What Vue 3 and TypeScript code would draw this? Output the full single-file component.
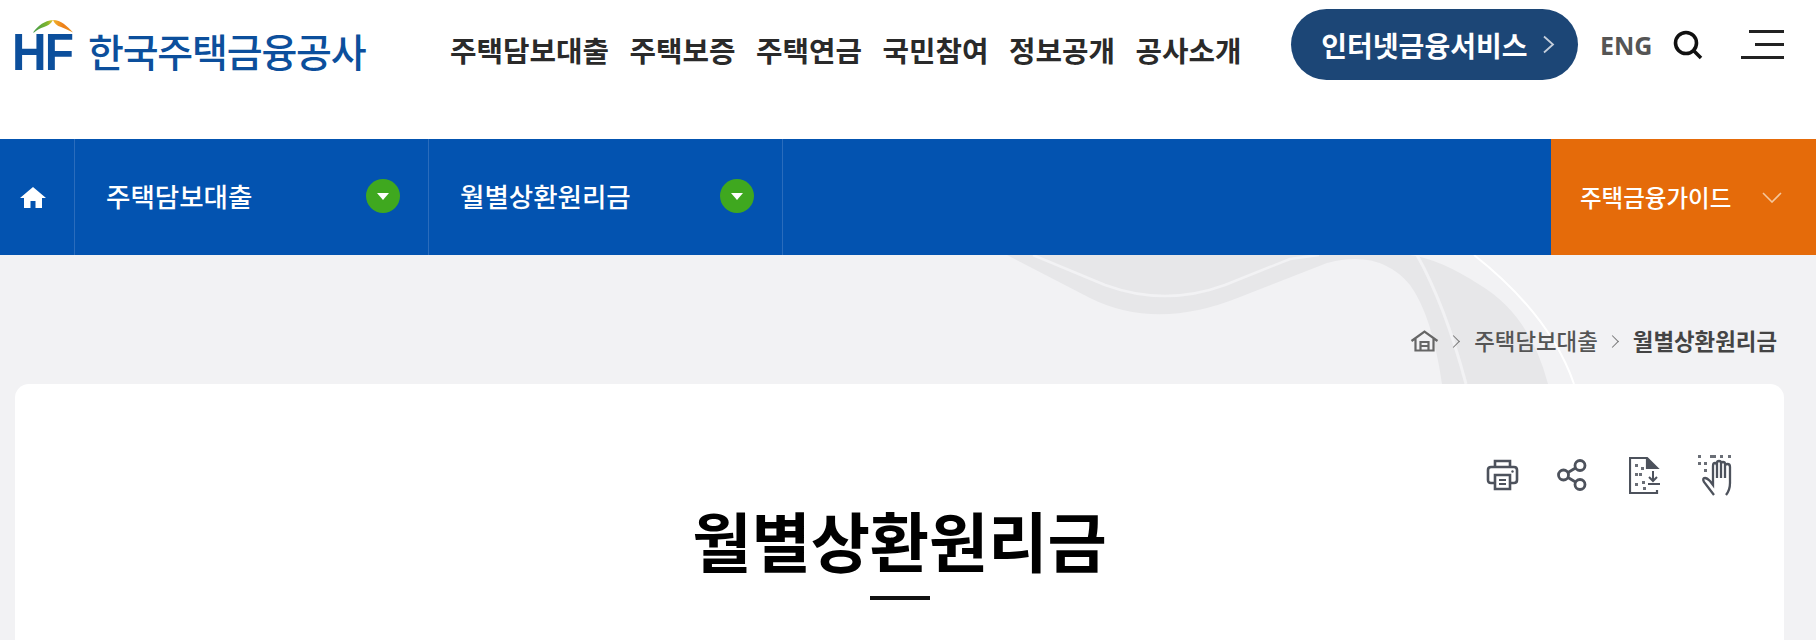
<script setup lang="ts">
const gnb: string[] = ['주택담보대출', '주택보증', '주택연금', '국민참여', '정보공개', '공사소개']
const selects: string[] = ['주택담보대출', '월별상환원리금']
// braille dots around the hand icon
const dots: number[][] = [[0, 1], [12, 1], [15, 1], [22, 1], [30, 1], [0, 8], [6, 8], [6, 15]]
</script>

<template>
  <div class="page">
    <header class="header">
      <a class="logo">
        <span class="logo-mark">
          <svg class="roof" width="40" height="13" viewBox="0 0 40 13">
            <defs>
              <linearGradient id="leaf-l" x1="0" x2="1" y1="0" y2="0">
                <stop offset="0" stop-color="#3f9a4a" />
                <stop offset="0.7" stop-color="#7db52e" />
                <stop offset="1" stop-color="#e6c02c" />
              </linearGradient>
              <linearGradient id="leaf-r" x1="0" x2="1" y1="0" y2="0">
                <stop offset="0" stop-color="#f0b429" />
                <stop offset="0.5" stop-color="#ee7f1a" />
                <stop offset="1" stop-color="#e8901e" />
              </linearGradient>
            </defs>
            <path d="M0 12.5 C6 5 11 1 20 0 C18 4 14 6 11 7 C7 8 4 10 1 12.5 Z" fill="url(#leaf-l)" />
            <path d="M20 0 C28 0 34 6 40 12.5 C35 10 31 8 28 7 C24 6 21 3 20 0 Z" fill="url(#leaf-r)" />
          </svg>
          <span class="hf">HF</span>
        </span>
        <span class="logo-text">한국주택금융공사</span>
      </a>
      <nav class="gnb">
        <a v-for="item in gnb" :key="item">{{ item }}</a>
      </nav>
      <a class="service-btn">
        인터넷금융서비스
        <svg width="13" height="19" viewBox="0 0 13 19">
          <path d="M2 1.5 L11 9.5 L2 17.5" fill="none" stroke="#c4cedb" stroke-width="1.8" />
        </svg>
      </a>
      <a class="eng">ENG</a>
      <svg class="search" width="30" height="30" viewBox="0 0 30 30">
        <circle cx="13" cy="13" r="10.5" fill="none" stroke="#111" stroke-width="3.6" />
        <path d="M20.5 20.5 L28 28" stroke="#111" stroke-width="3.6" />
      </svg>
      <div class="hamburger">
        <span class="line-1"></span>
        <span class="line-2"></span>
        <span class="line-3"></span>
      </div>
    </header>

    <div class="location-bar">
      <a class="home">
        <svg width="26" height="21" viewBox="0 0 26 21">
          <path d="M13 0 L26 11 H22 V21 H15.5 V14 H10.5 V21 H4 V11 H0 Z" fill="#fff" />
        </svg>
      </a>
      <div v-for="item in selects" :key="item" class="select">
        <span>{{ item }}</span>
        <i class="select-arrow"></i>
      </div>
      <a class="guide">
        주택금융가이드
        <svg width="20" height="11" viewBox="0 0 20 11">
          <path d="M1 1 L10 10 L19 1" fill="none" stroke="#f5c79c" stroke-width="1.6" />
        </svg>
      </a>
    </div>

    <main class="content">
      <svg class="swoosh" width="640" height="129" viewBox="0 0 640 129">
        <path d="M67 0 L150 43 Q216 76 300 42 L387 8 Q440 -6 470 30 Q492 60 502 129 H608 Q590 60 540 30 Q500 4 470 0 Z" fill="#e7e7e9" />
        <path d="M93 0 L165 30 Q225 52 285 30 L350 4 L379 0" fill="none" stroke="#f2f2f4" stroke-width="2.5" />
        <path d="M477 0 Q505 50 526 129" fill="none" stroke="#f2f2f4" stroke-width="3" />
        <path d="M534 0 Q610 60 634 129" fill="none" stroke="#fff" stroke-width="2" />
      </svg>

      <div class="breadcrumb">
        <svg width="29" height="22" viewBox="0 0 29 22">
          <path d="M1.5 11 L14.5 1.5 L27.5 11 M5.5 9 V20.5 H23.5 V9 M10.5 20.5 V12 H18.5 V20.5 M10.5 16 H18.5" fill="none" stroke="#666" stroke-width="2.2" />
        </svg>
        <i class="crumb-arrow"></i>
        <span>주택담보대출</span>
        <i class="crumb-arrow"></i>
        <strong>월별상환원리금</strong>
      </div>

      <section class="card">
        <div class="tools">
          <svg class="print" width="33" height="32" viewBox="0 0 33 32" fill="none" stroke="#4d525c" stroke-width="2.6">
            <path d="M9 8 V2 H24 V8" />
            <path d="M8 24 H5 Q2 24 2 21 V11 Q2 8 5 8 H28 Q31 8 31 11 V21 Q31 24 28 24 H25" />
            <path d="M9 16 H24 V30 H9 Z" />
            <path d="M13 21 H20 M13 25 H20" stroke-width="2" />
            <circle cx="26.5" cy="12.5" r="1.2" fill="#4d525c" stroke="none" />
          </svg>
          <svg class="share" width="30" height="32" viewBox="0 0 30 32" fill="none" stroke="#4d525c" stroke-width="2.8">
            <circle cx="6.5" cy="16" r="5" />
            <circle cx="23" cy="6.5" r="5" />
            <circle cx="23" cy="25.5" r="5" />
            <path d="M11 13.5 L18.5 9 M11 18.5 L18.5 23" />
          </svg>
          <svg class="doc" width="33" height="37" viewBox="0 0 33 37" fill="none" stroke="#4d525c" stroke-width="2.2">
            <path d="M18 1 H1 V36 H28 V33" />
            <path d="M18 1 L28 11 H18 Z" fill="#4d525c" />
            <path d="M24 14 V23 M20 20 L24 24 L28 20 M19 27 H31" stroke-width="2" />
            <g fill="#6a6e76" stroke="none">
              <rect x="6" y="7" width="3" height="3" /><rect x="12" y="10" width="3" height="3" />
              <rect x="6" y="16" width="3" height="3" /><rect x="10" y="16" width="3" height="3" />
              <rect x="6" y="26" width="3" height="3" /><rect x="13" y="24" width="3" height="3" />
              <rect x="14" y="30" width="3" height="3" />
            </g>
          </svg>
          <svg class="hand" width="34" height="42" viewBox="0 0 34 42" fill="none" stroke="#4d525c" stroke-width="2.3">
            <rect v-for="d in dots" :key="d.join('-')" :x="d[0]" :y="d[1]" width="3" height="3" fill="#6a6e76" stroke="none" />
            <path d="M16 41 L6 28 Q4 24 7 24 Q9 24 12 27 L15 31 V12 Q15 9 17 9 Q19 9 19 12 V24 M19 12 V9 Q19 7 21 7 Q23 7 23 9 V24 M23 10 Q23 8 25 8 Q27 8 27 10 V24 M27 12 Q27 10 29.5 10 Q32 10 32 13 V29 Q32 36 28 41" />
          </svg>
        </div>
        <h1 class="title">월별상환원리금</h1>
        <i class="title-line"></i>
      </section>
    </main>
  </div>
</template>

<style>
body {
  margin: 0;
  overflow: hidden;
}
</style>

<style scoped>
.page {
  width: 1816px;
  height: 640px;
  font-family: "Noto Sans CJK KR", "Noto Sans", sans-serif;
  background: #f2f2f4;
}

/* 상단 헤더 */
.header {
  display: flex;
  align-items: center;
  box-sizing: border-box;
  height: 139px;
  padding: 0 32px 50px 15px;
  background: #fff;
}

.logo {
  display: flex;
  align-items: center;
  width: 352px;
  margin-top: 14px;
}

.logo-mark {
  position: relative;
  width: 73px;
  height: 52px;
}

.hf {
  display: inline-block;
  margin-left: -3px;
  font-family: "Liberation Sans", sans-serif;
  font-size: 52px;
  font-weight: 700;
  line-height: 52px;
  letter-spacing: -2px;
  color: #0c4f9c;
  transform: scaleX(0.92);
  transform-origin: left;
}

.roof {
  position: absolute;
  left: 18px;
  top: -6px;
}

.logo-text {
  margin-bottom: 4px;
  font-size: 39px;
  font-weight: 500;
  line-height: 52px;
  letter-spacing: -1.2px;
  color: #0c4f9c;
  white-space: nowrap;
}

.gnb {
  display: flex;
  gap: 20.5px;
  margin: 10px 0 0 83px;
  font-size: 28.8px;
  font-weight: 700;
  color: #2a2a2a;
  white-space: nowrap;
}

.service-btn {
  display: flex;
  align-items: center;
  justify-content: center;
  gap: 15px;
  box-sizing: border-box;
  width: 287px;
  height: 71px;
  margin-left: 49.5px;
  padding-left: 8px;
  border-radius: 36px;
  background: #1c4676;
  color: #fff;
  font-size: 28px;
  font-weight: 700;
  white-space: nowrap;
}

.eng {
  margin-left: 22px;
  font-family: "Open Sans", sans-serif;
  font-size: 25px;
  font-weight: 700;
  color: #555;
}

.search {
  margin-left: auto;
}

.hamburger {
  display: flex;
  flex-direction: column;
  align-items: flex-end;
  gap: 10px;
  width: 43px;
  margin-left: 38px;
}

.hamburger span {
  height: 3px;
  background: #222;
}

.line-1 { width: 35px; }
.line-2 { width: 29px; }
.line-3 { width: 43px; }

/* 위치 선택 바 */
.location-bar {
  display: flex;
  align-items: stretch;
  height: 116px;
  background: #0353b0;
  color: #fff;
}

.home {
  display: flex;
  align-items: center;
  box-sizing: border-box;
  width: 75px;
  padding-left: 20px;
  border-right: 1px solid #2a6cbc;
}

.select {
  display: flex;
  align-items: center;
  justify-content: space-between;
  box-sizing: border-box;
  width: 354px;
  padding: 0 28px 2px 31px;
  border-right: 1px solid #2a6cbc;
  font-size: 26.5px;
  font-weight: 500;
}

.select span {
  margin-bottom: 2px;
}

.select-arrow {
  position: relative;
  width: 34px;
  height: 34px;
  border-radius: 50%;
  background: #3fa81f;
}

.select-arrow::after {
  content: "";
  position: absolute;
  left: 11px;
  top: 14px;
  border-style: solid;
  border-width: 7px 6px 0;
  border-color: #fff transparent transparent;
}

.guide {
  display: flex;
  align-items: center;
  justify-content: space-between;
  box-sizing: border-box;
  width: 265px;
  margin-left: auto;
  padding: 0 34px 0 29px;
  background: #e56b0a;
  font-size: 23.5px;
  font-weight: 500;
  white-space: nowrap;
}

/* 본문 */
.content {
  position: relative;
  display: flex;
  flex-direction: column;
  box-sizing: border-box;
  height: 385px;
  padding: 70px 32px 0 15px;
  overflow: hidden;
}

.swoosh {
  position: absolute;
  left: 940px;
  top: 0;
}

.breadcrumb {
  position: relative;
  display: flex;
  align-items: center;
  justify-content: flex-end;
  gap: 10px;
  height: 32px;
  margin-bottom: 27px;
  padding-right: 7px;
  font-size: 22.4px;
  color: #555;
  white-space: nowrap;
}

.breadcrumb span,
.breadcrumb strong {
  margin-bottom: 2px;
  font-weight: 500;
}

.breadcrumb strong {
  font-weight: 700;
  color: #444;
}

.crumb-arrow {
  width: 8px;
  height: 8px;
  margin: 0 6px 0 0;
  border-top: 1.5px solid #777;
  border-right: 1.5px solid #777;
  transform: rotate(45deg);
}

.card {
  position: relative;
  display: flex;
  flex-direction: column;
  align-items: center;
  flex: 1;
  padding-top: 70px;
  border-radius: 14px 14px 0 0;
  background: #fff;
}

.tools {
  display: flex;
  align-items: center;
  align-self: flex-end;
  height: 42px;
  padding-right: 52px;
}

.share { margin-left: 38px; }
.doc { margin-left: 42px; }
.hand { margin-left: 36px; }

.title {
  margin: 8px 0 22px;
  font-size: 64.4px;
  font-weight: 700;
  line-height: 70px;
  color: #000;
}

.title-line {
  width: 60px;
  height: 4px;
  background: #111;
}
</style>
